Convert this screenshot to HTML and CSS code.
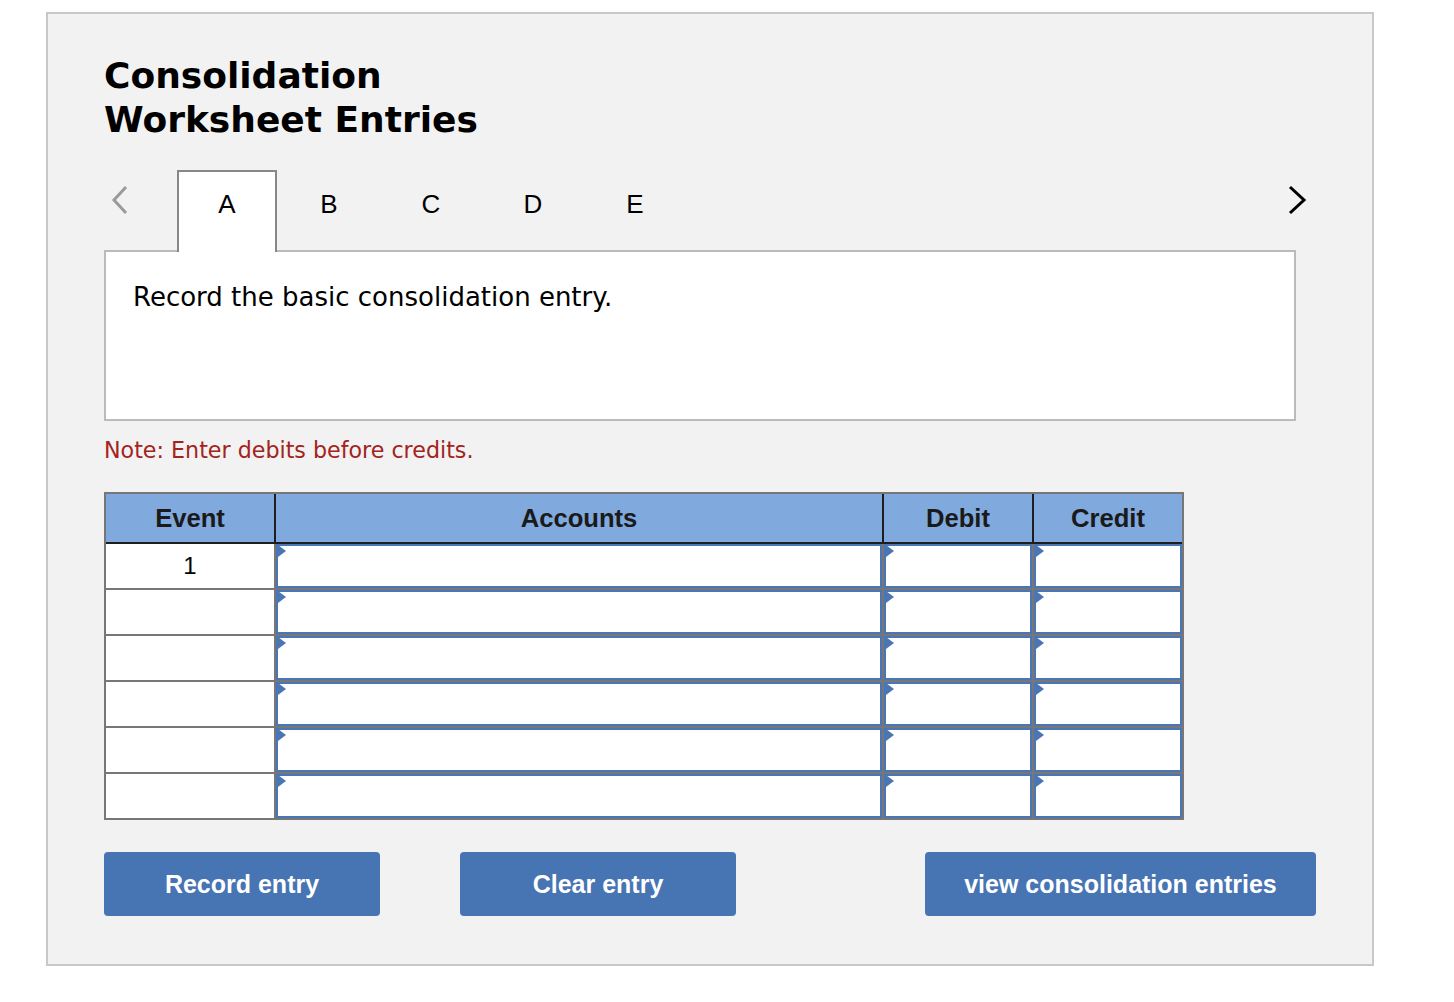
FILE: index.html
```html
<!DOCTYPE html>
<html lang="en">
  <head>
    <meta charset="UTF-8" />
    <meta name="viewport" content="width=device-width, initial-scale=1.0" />
    <title>Consolidation Worksheet Entries</title>
    <link rel="stylesheet" href="styles.css">
  </head>
  <body>
    <div class="panel">
      <h1 class="title">Consolidation<br />Worksheet Entries</h1>
      <div class="tabRow">
        <div class="arrowLeft">
          <svg width="20" height="30" viewBox="0 0 20 30">
            <polyline points="18,2 6,15 18,28" fill="none" stroke="#9a9a9a" stroke-width="3" />
          </svg>
        </div>
        <div class="tab active">A</div>
        <div class="tab">B</div>
        <div class="tab">C</div>
        <div class="tab">D</div>
        <div class="tab">E</div>
        <div class="arrowRight">
          <svg width="20" height="30" viewBox="0 0 20 30">
            <polyline points="2,2 16,15 2,28" fill="none" stroke="#000" stroke-width="3" />
          </svg>
        </div>
      </div>
      <div class="question">Record the basic consolidation entry.</div>
      <p class="note">Note: Enter debits before credits.</p>
      <table class="journal">
        <thead>
          <tr>
            <th class="cEvent">Event</th>
            <th class="cAcc">Accounts</th>
            <th class="cAmt">Debit</th>
            <th class="cAmt">Credit</th>
          </tr>
        </thead>
        <tbody>
          <tr>
            <td class="num">1</td>
            <td><div class="inBox"></div></td>
            <td><div class="inBox"></div></td>
            <td><div class="inBox"></div></td>
          </tr>
          <tr>
            <td class="num"></td>
            <td><div class="inBox"></div></td>
            <td><div class="inBox"></div></td>
            <td><div class="inBox"></div></td>
          </tr>
          <tr>
            <td class="num"></td>
            <td><div class="inBox"></div></td>
            <td><div class="inBox"></div></td>
            <td><div class="inBox"></div></td>
          </tr>
          <tr>
            <td class="num"></td>
            <td><div class="inBox"></div></td>
            <td><div class="inBox"></div></td>
            <td><div class="inBox"></div></td>
          </tr>
          <tr>
            <td class="num"></td>
            <td><div class="inBox"></div></td>
            <td><div class="inBox"></div></td>
            <td><div class="inBox"></div></td>
          </tr>
          <tr>
            <td class="num"></td>
            <td><div class="inBox"></div></td>
            <td><div class="inBox"></div></td>
            <td><div class="inBox"></div></td>
          </tr>
        </tbody>
      </table>
      <div class="btnArea">
        <button class="btn btnRecord">Record entry</button>
        <button class="btn btnClear">Clear entry</button>
        <button class="btn btnView">view consolidation entries</button>
      </div>
    </div>
  </body>
</html>
```

FILE: styles.css
```css
body {
  margin: 0;
  background: #fff;
}
.panel {
  margin: 12px 0 0 46px;
  width: 1328px;
  box-sizing: border-box;
  border: 2px solid #c8c8c8;
  background: #f2f2f2;
  padding: 40px 0 48px 56px;
}
.title {
  margin: 0;
  font-family: "DejaVu Sans", Verdana, sans-serif;
  font-weight: bold;
  font-size: 36px;
  line-height: 44px;
  color: #000;
}
.tabRow {
  display: flex;
  width: 1212px;
  box-sizing: border-box;
  padding-right: 8px;
  margin-top: 28px;
  height: 80px;
}
.arrowLeft {
  width: 73px;
  padding: 15px 0 0 4px;
  box-sizing: border-box;
}
.arrowRight {
  margin-left: auto;
  padding-top: 15px;
}
.tab {
  width: 100px;
  margin-right: 2px;
  box-sizing: border-box;
  padding-top: 21px;
  text-align: center;
  font-family: "Liberation Sans", Arial, sans-serif;
  font-size: 26px;
  line-height: 26px;
  color: #000;
}
.tab.active {
  position: relative;
  z-index: 1;
  height: 82px;
  padding-top: 19px;
  border: 2px solid #888;
  border-bottom: none;
  background: #fff;
}
.question {
  width: 1192px;
  height: 171px;
  box-sizing: border-box;
  border: 2px solid #bbb;
  background: #fff;
  padding: 27px 27px;
  font-family: "DejaVu Sans", Verdana, sans-serif;
  font-size: 26px;
  line-height: 36px;
  color: #000;
}
.note {
  margin: 16px 0 0;
  font-family: "DejaVu Sans", Verdana, sans-serif;
  font-size: 22.2px;
  line-height: 26px;
  color: #a3231d;
}
.journal {
  margin-top: 29px;
  border: 2px solid #777;
  border-collapse: separate;
  border-spacing: 0;
  table-layout: fixed;
  width: 1080px;
  background: #fff;
}
.journal th {
  box-sizing: border-box;
  height: 50px;
  padding: 0;
  background: #80a9de;
  border-bottom: 2px solid #1e1e1e;
  font-family: "Liberation Sans", Arial, sans-serif;
  font-size: 25.6px;
  font-weight: bold;
  color: #1a1a1a;
  text-align: center;
}
.journal th + th {
  border-left: 2px solid #1e1e1e;
}
.cEvent {
  width: 168px;
}
.cAcc {
  width: 608px;
}
.cAmt {
  width: 150px;
}
.journal td {
  padding: 0;
  height: 44px;
  box-sizing: border-box;
}
.journal td + td {
  border-left: 2px solid #777;
}
.journal tbody tr + tr td {
  border-top: 2px solid #777;
  height: 46px;
}
.num {
  text-align: center;
  font-family: "Liberation Sans", Arial, sans-serif;
  font-size: 24px;
  color: #000;
}
.inBox {
  position: relative;
  height: 44px;
  box-sizing: border-box;
  border: 2px solid #4a76b6;
  background: #fff;
}
.inBox::before {
  content: "";
  position: absolute;
  left: 0;
  top: -1px;
  border-left: 8px solid #4a76b6;
  border-top: 6px solid transparent;
  border-bottom: 6px solid transparent;
}
.btnArea {
  display: flex;
  width: 1212px;
  margin-top: 32px;
}
.btn {
  height: 64px;
  border: none;
  border-radius: 4px;
  background: #4774b3;
  color: #fff;
  font-family: "Liberation Sans", Arial, sans-serif;
  font-size: 25px;
  font-weight: bold;
  padding: 0;
}
.btnRecord,
.btnClear {
  width: 276px;
}
.btnClear {
  margin-left: 80px;
}
.btnView {
  width: 391px;
  margin-left: auto;
}
```
